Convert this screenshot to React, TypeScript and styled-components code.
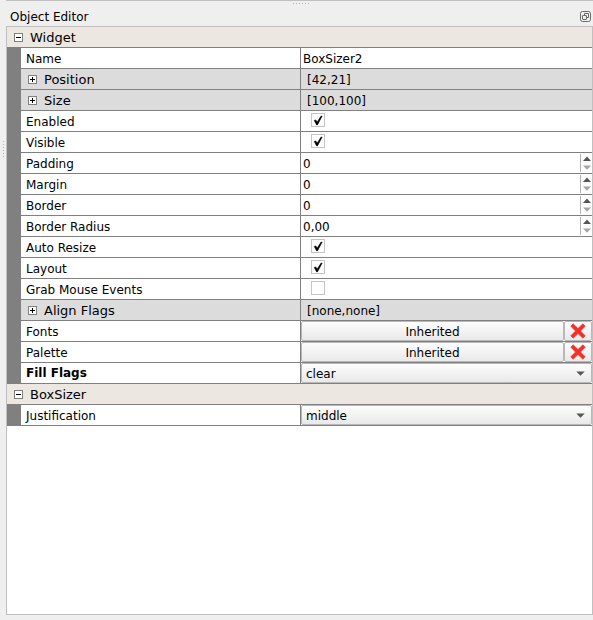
import React from "react";
import styled, { createGlobalStyle, css } from "styled-components";

const Global = createGlobalStyle`
  * { box-sizing: border-box; }
  html, body { margin: 0; padding: 0; background: #efefef; overflow: hidden; }
`;

const LINE = "#808080";
const FRAME = "#c0c0c0";

const Dock = styled.main`
  position: relative;
  width: 593px;
  height: 620px;
  display: flex;
  flex-direction: column;
  padding: 0 0 5px 6px;
  background: #efefef;
  color: #000;
  font: 12px/20px "DejaVu Sans", sans-serif;
  white-space: pre;
`;

const Grip = styled.svg<{ $left: number; $top: number }>`
  position: absolute;
  left: ${(p) => p.$left}px;
  top: ${(p) => p.$top}px;
`;

const TitleBar = styled.header`
  height: 26px;
  flex: none;
  display: flex;
  align-items: flex-start;
  justify-content: space-between;
  border-top: 1px solid ${FRAME};
  padding: 4px 2px 0 4px;
`;

const FloatIcon = styled.svg`
  margin-top: 6px;
`;

const Tree = styled.section`
  flex: 1;
  border: 1px solid ${FRAME};
  background: #fff;
`;

const Caption = styled.span`
  padding-top: 2px;
`;

const GroupHeader = styled.div`
  height: 21px;
  display: flex;
  align-items: center;
  gap: 7px;
  padding-left: 7px;
  background: #ece8e1;
  border-bottom: 1px solid ${LINE};
  font: 13px/20px "DejaVu Sans", sans-serif;
`;

const GroupBody = styled.div`
  border-left: 14px solid ${LINE};
`;

const Row = styled.div<{ $parent?: boolean }>`
  height: 21px;
  display: grid;
  grid-template-columns: 279px 1fr;
  grid-template-rows: 20px;
  background: ${(p) => (p.$parent ? "#dcdcdc" : "#fff")};
  border-bottom: 1px solid ${LINE};
`;

const Label = styled.div<{ $parent?: boolean; $bold?: boolean }>`
  display: flex;
  align-items: center;
  gap: 7px;
  padding-left: 5px;
  ${(p) =>
    p.$parent &&
    css`
      padding-left: 7px;
      font: 13px/20px "DejaVu Sans", sans-serif;
    `}
  ${(p) =>
    p.$bold &&
    css`
      font: bold 12px/18px "DejaVu Sans", sans-serif;
      padding-bottom: 2px;
    `}
`;

const Value = styled.div<{ $inset?: boolean }>`
  display: flex;
  min-width: 0;
  border-left: 1px solid ${LINE};
  padding-left: ${(p) => (p.$inset ? 4 : 0)}px;
`;

const Field = styled.span`
  flex: 1;
  padding: 1px 0 0 2px;
`;

const SpinButtons = styled.div`
  width: 12px;
  height: 18px;
  margin-top: 1px;
  padding-left: 2px;
  border-left: 1px solid #b4b4b4;
  line-height: 0;
`;

const Check = styled.span`
  width: 14px;
  height: 14px;
  margin: 2px 0 0 10px;
  border: 1px solid #c4c4c4;
  background: #fff;
  line-height: 0;
`;

const Button = styled.button<{ $width?: number; $start?: boolean }>`
  width: ${(p) => (p.$width ? `${p.$width}px` : "auto")};
  flex: ${(p) => (p.$width ? "none" : 1)};
  height: 20px;
  display: flex;
  align-items: center;
  justify-content: ${(p) => (p.$start ? "space-between" : "center")};
  margin: 0;
  padding: ${(p) => (p.$start ? "0 6px 0 4px" : "0")};
  border: 1px solid #b8b8b8;
  border-radius: 2px;
  background: linear-gradient(#fdfdfd, #e9e9e9);
  color: #000;
  font: 12px/18px "DejaVu Sans", sans-serif;
`;

const Expander = ({ open = false }: { open?: boolean }) => (
  <svg width="9" height="9" shapeRendering="crispEdges">
    <rect x=".5" y=".5" width="8" height="8" fill="#fff" stroke="#808080" />
    <path d={open ? "M2 4.5h5" : "M2 4.5h5M4.5 2v5"} stroke="#000" />
  </svg>
);

const Toggle = ({ on }: { on: boolean }) => (
  <Check>
    {on && (
      <svg width="12" height="12">
        <path d="M2.2 6.4 3.8 5.9 5.2 8.1 9 2.1 10.2 2 5.5 10.9H4.6Z" fill="#000" stroke="#000" strokeWidth=".5" />
      </svg>
    )}
  </Check>
);

const Spin = ({ value }: { value: string }) => (
  <>
    <Field>{value}</Field>
    <SpinButtons>
      <svg width="8" height="18">
        <path d="M0 7 4 2.6 8 7Z" fill="#555" />
        <path d="M0 11.5h8L4 15.8Z" fill="#a5a5a5" />
      </svg>
    </SpinButtons>
  </>
);

const Cross = () => (
  <svg width="16" height="16" viewBox="0 0 16 16">
    <path
      d="M3.2 .9 8 5.6 12.8 .9 15.1 3.2 10.4 8 15.1 12.8 12.8 15.1 8 10.4 3.2 15.1 .9 12.8 5.6 8 .9 3.2Z"
      fill="#f0322a"
      stroke="#f0322a"
      strokeWidth=".9"
      strokeLinejoin="round"
    />
  </svg>
);

const Inherited = () => (
  <>
    <Button $width={263}>
      <Caption>Inherited</Caption>
    </Button>
    <Button $width={28}>
      <Cross />
    </Button>
  </>
);

const Combo = ({ value }: { value: string }) => (
  <Button $start>
    <Caption>{value}</Caption>
    <svg width="9" height="5">
      <path d="M.3.4h8.4L4.5 4.8Z" fill="#555" />
    </svg>
  </Button>
);

type Kind = "text" | "parent" | "check" | "spin" | "inherited" | "combo";
type Prop = { name: string; kind: Kind; value?: string; on?: boolean; bold?: boolean };

const groups: { title: string; props: Prop[] }[] = [
  {
    title: "Widget",
    props: [
      { name: "Name", kind: "text", value: "BoxSizer2" },
      { name: "Position", kind: "parent", value: "[42,21]" },
      { name: "Size", kind: "parent", value: "[100,100]" },
      { name: "Enabled", kind: "check", on: true },
      { name: "Visible", kind: "check", on: true },
      { name: "Padding", kind: "spin", value: "0" },
      { name: "Margin", kind: "spin", value: "0" },
      { name: "Border", kind: "spin", value: "0" },
      { name: "Border Radius", kind: "spin", value: "0,00" },
      { name: "Auto Resize", kind: "check", on: true },
      { name: "Layout", kind: "check", on: true },
      { name: "Grab Mouse Events", kind: "check", on: false },
      { name: "Align Flags", kind: "parent", value: "[none,none]" },
      { name: "Fonts", kind: "inherited" },
      { name: "Palette", kind: "inherited" },
      { name: "Fill Flags", kind: "combo", value: "clear", bold: true },
    ],
  },
  { title: "BoxSizer", props: [{ name: "Justification", kind: "combo", value: "middle" }] },
];

const Editor = ({ kind, value = "", on = false }: Prop) => {
  switch (kind) {
    case "check":
      return <Toggle on={on} />;
    case "spin":
      return <Spin value={value} />;
    case "inherited":
      return <Inherited />;
    case "combo":
      return <Combo value={value} />;
    default:
      return <Field>{value}</Field>;
  }
};

export default function App() {
  return (
    <Dock>
      <Global />
      <Grip $left={293} $top={3} width="17" height="1">
        <path d="M0 .5h17" stroke="#b4b4b4" strokeDasharray="1 2" />
      </Grip>
      <Grip $left={3} $top={141} width="1" height="17">
        <path d="M.5 0v17" stroke="#b4b4b4" strokeDasharray="1 2" />
      </Grip>
      <TitleBar>
        <Caption>Object Editor</Caption>
        <FloatIcon width="11" height="11" fill="none" stroke="#6a6a66">
          <rect x=".5" y=".5" width="10" height="10" rx="2" />
          <rect x="2.5" y="4.5" width="4" height="4" rx=".5" />
          <path d="M4.5 4V2.5h4v4H7" />
        </FloatIcon>
      </TitleBar>
      <Tree>
        {groups.map((g) => (
          <React.Fragment key={g.title}>
            <GroupHeader>
              <Expander open />
              <Caption>{g.title}</Caption>
            </GroupHeader>
            <GroupBody>
              {g.props.map((p) => {
                const parent = p.kind === "parent";
                return (
                  <Row key={p.name} $parent={parent}>
                    <Label $parent={parent} $bold={p.bold}>
                      {parent && <Expander />}
                      <Caption>{p.name}</Caption>
                    </Label>
                    <Value $inset={parent}>
                      <Editor {...p} />
                    </Value>
                  </Row>
                );
              })}
            </GroupBody>
          </React.Fragment>
        ))}
      </Tree>
    </Dock>
  );
}
